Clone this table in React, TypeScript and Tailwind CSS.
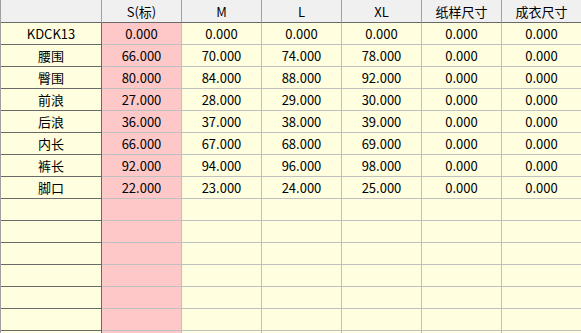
import React from 'react';

const sizes = ['S(标)', 'M', 'L', 'XL', '纸样尺寸', '成衣尺寸'];

const rows: [string, string[]][] = [
  ['KDCK13', ['0.000', '0.000', '0.000', '0.000', '0.000', '0.000']],
  ['腰围', ['66.000', '70.000', '74.000', '78.000', '0.000', '0.000']],
  ['臀围', ['80.000', '84.000', '88.000', '92.000', '0.000', '0.000']],
  ['前浪', ['27.000', '28.000', '29.000', '30.000', '0.000', '0.000']],
  ['后浪', ['36.000', '37.000', '38.000', '39.000', '0.000', '0.000']],
  ['内长', ['66.000', '67.000', '68.000', '69.000', '0.000', '0.000']],
  ['裤长', ['92.000', '94.000', '96.000', '98.000', '0.000', '0.000']],
  ['脚口', ['22.000', '23.000', '24.000', '25.000', '0.000', '0.000']],
  ['', ['', '', '', '', '', '']],
  ['', ['', '', '', '', '', '']],
  ['', ['', '', '', '', '', '']],
  ['', ['', '', '', '', '', '']],
  ['', ['', '', '', '', '', '']],
  ['', ['', '', '', '', '', '']],
  ['', ['', '', '', '', '', '']],
];

export default function App() {
  return (
    <div
      className="w-[581px] h-[333px] overflow-hidden bg-white text-[13px] text-black"
      style={{ fontFamily: '"Microsoft YaHei", "Noto Sans CJK SC", sans-serif' }}
    >
      <div className="grid grid-cols-[101px_repeat(6,80px)] border-l border-[#a0a0a0]">
        {/* Header */}
        <div className="h-[23px] bg-[#f0f0f0] border-r border-b border-r-[#a0a0a0] border-b-[#696969]" />
        {sizes.map((s) => (
          <div
            key={s}
            className="h-[23px] bg-[#f0f0f0] border-r border-b border-r-[#a0a0a0] border-b-[#696969] flex items-center justify-center leading-none"
          >
            {s}
          </div>
        ))}

        {rows.map(([name, vals], i) => (
          <React.Fragment key={i}>
            <div className="h-[22px] bg-[#ffffe0] border-r border-b border-[#696969] flex items-center justify-center leading-none">
              {name}
            </div>
            {vals.map((v, j) => (
              <div
                key={j}
                className={`h-[22px] border-r border-b border-[#c0c0c0] flex items-center justify-center leading-none ${
                  j === 0 ? 'bg-[#ffc8c8]' : 'bg-[#ffffe0]'
                }`}
              >
                {v}
              </div>
            ))}
          </React.Fragment>
        ))}
      </div>
    </div>
  );
}
